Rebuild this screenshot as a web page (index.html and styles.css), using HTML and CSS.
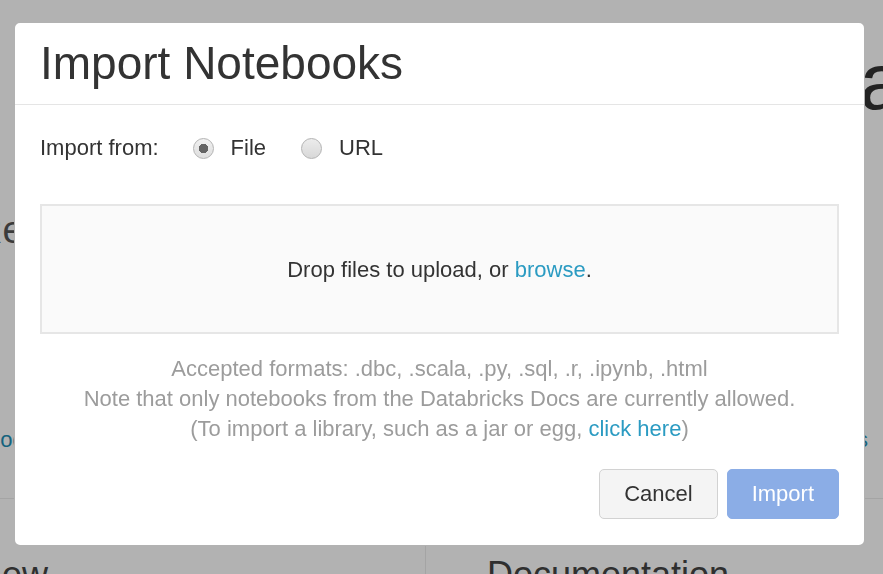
FILE: index.html
```html
<!DOCTYPE html>
<html lang="en">
<head>
<meta charset="utf-8">
<title>Import Notebooks</title>
<link rel="stylesheet" href="styles.css">
</head>
<body>
<div class="page">
  <div class="hero-row"><h1 class="hero">Data</h1></div>
  <div class="feature-row"><h2 class="feature">Read</h2></div>
  <div class="links-row"><a class="bg-link bg-link-left">Good</a><a class="bg-link">Docs</a></div>
  <div class="columns">
    <div class="col col-left"><h3 class="col-title col-title-left">New</h3></div>
    <div class="col col-right"><h3 class="col-title">Documentation</h3></div>
  </div>
</div>
<div class="backdrop"></div>
<div class="modal" role="dialog" aria-labelledby="modal-title">
  <div class="modal-header">
    <h2 class="modal-title" id="modal-title">Import Notebooks</h2>
  </div>
  <div class="modal-body">
    <div class="source-row">
      <span class="source-label">Import from:</span>
      <label class="radio-option"><input type="radio" name="src" class="radio" checked><span>File</span></label>
      <label class="radio-option"><input type="radio" name="src" class="radio"><span>URL</span></label>
    </div>
    <div class="dropzone">
      <span>Drop files to upload, or <a class="link">browse</a>.</span>
    </div>
    <div class="help">
      <div>Accepted formats: .dbc, .scala, .py, .sql, .r, .ipynb, .html</div>
      <div>Note that only notebooks from the Databricks Docs are currently allowed.</div>
      <div>(To import a library, such as a jar or egg, <a class="link">click here</a>)</div>
    </div>
    <div class="modal-footer">
      <button class="btn btn-cancel" type="button">Cancel</button>
      <button class="btn btn-import" type="button">Import</button>
    </div>
  </div>
</div>
</body>
</html>
```
FILE: styles.css
```css
* { box-sizing: border-box; }
html, body { margin: 0; padding: 0; }
body {
  width: 883px;
  height: 574px;
  overflow: hidden;
  position: relative;
  background: #fff;
  font-family: "Liberation Sans", Arial, Helvetica, sans-serif;
  color: #333;
}

/* background page */
.page {
  height: 574px;
  display: flex;
  flex-direction: column;
}
.hero-row {
  padding-top: 42px;
  margin-right: -21px;
  display: flex;
  justify-content: flex-end;
}
.hero {
  margin: 0;
  font-size: 80px;
  line-height: 80px;
  font-weight: normal;
  color: #333;
  white-space: nowrap;
}
.feature-row { margin-top: 85px; }
.feature {
  margin: 0 0 0 -25px;
  font-size: 38px;
  line-height: 46px;
  font-weight: normal;
  color: #555;
}
.links-row {
  margin-top: 172px;
  display: flex;
  justify-content: space-between;
  padding-right: 15px;
  font-size: 22px;
  line-height: 30px;
}
.bg-link { color: #1f8fb5; }
.bg-link-left { margin-left: -29px; }
.columns {
  margin-top: 43px;
  border-top: 1px solid #ebebeb;
  display: flex;
  flex: 1;
}
.col { padding-top: 54px; }
.col-left { width: 426px; border-right: 1px solid #ebebeb; }
.col-right { padding-left: 61px; }
.col-title {
  margin: 0;
  font-size: 36px;
  line-height: 44px;
  font-weight: normal;
  color: #444;
}
.col-title-left { margin-left: -24px; }

.backdrop {
  position: fixed;
  inset: 0;
  background: rgba(0, 0, 0, 0.3);
}

/* modal */
.modal {
  position: absolute;
  left: 14px;
  top: 22px;
  width: 851px;
  height: 524px;
  background: #fff;
  border: 1px solid rgba(0, 0, 0, 0.3);
  border-radius: 6px;
  display: flex;
  flex-direction: column;
}
.modal-header {
  padding: 15px 22px 16px 25px;
  border-bottom: 1px solid #e5e5e5;
}
.modal-title {
  margin: 0;
  font-size: 46px;
  line-height: 50px;
  font-weight: normal;
  color: #333;
}
.modal-body {
  padding: 28px 25px 0;
  font-size: 22px;
}
.source-row {
  display: flex;
  align-items: center;
  height: 30px;
  line-height: 30px;
}
.source-label { margin-right: 34px; }
.radio-option {
  display: flex;
  align-items: center;
  gap: 17px;
  margin-right: 35px;
}
.radio {
  appearance: none;
  -webkit-appearance: none;
  margin: 0;
  width: 21px;
  height: 21px;
  border-radius: 50%;
  border: 1px solid #b3b3b3;
  background: linear-gradient(#ececec, #d8d8d8);
}
.radio:checked {
  background: radial-gradient(circle, #636363 0 4.5px, transparent 5px), linear-gradient(#f0f0f0, #dedede);
}
.dropzone {
  margin-top: 41px;
  height: 130px;
  border: 2px solid #e6e6e6;
  background: #fafafa;
  display: flex;
  align-items: center;
  justify-content: center;
  padding-top: 2px;
  color: #333;
}
.link { color: #2b9bc2; text-decoration: none; }
.help {
  margin-top: 20px;
  text-align: center;
  color: #9c9c9c;
  line-height: 30px;
}
.modal-footer {
  margin-top: 25px;
  display: flex;
  justify-content: flex-end;
  gap: 9px;
}
.btn {
  height: 50px;
  padding: 0 24px;
  font-family: inherit;
  font-size: 22px;
  border-radius: 5px;
}
.btn-cancel {
  background: #f4f4f4;
  border: 1px solid #d2d2d2;
  color: #333;
}
.btn-import {
  background: #8bade6;
  border: 1px solid #8bade6;
  color: #fff;
}
```
